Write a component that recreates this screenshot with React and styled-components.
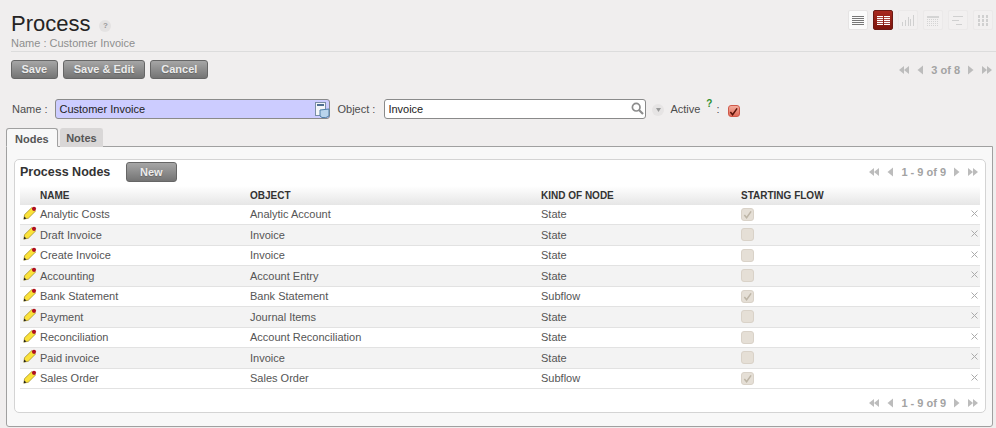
import React from "react";
import styled, { createGlobalStyle } from "styled-components";

const nodes = [
  { name: "Analytic Costs", object: "Analytic Account", kind: "State", flow: true },
  { name: "Draft Invoice", object: "Invoice", kind: "State", flow: false },
  { name: "Create Invoice", object: "Invoice", kind: "State", flow: false },
  { name: "Accounting", object: "Account Entry", kind: "State", flow: false },
  { name: "Bank Statement", object: "Bank Statement", kind: "Subflow", flow: true },
  { name: "Payment", object: "Journal Items", kind: "State", flow: false },
  { name: "Reconciliation", object: "Account Reconciliation", kind: "State", flow: false },
  { name: "Paid invoice", object: "Invoice", kind: "State", flow: false },
  { name: "Sales Order", object: "Sales Order", kind: "Subflow", flow: true },
];

const GlobalStyle = createGlobalStyle`
  html, body {
    margin: 0;
    background: #f0eeee;
    font-family: "Liberation Sans", Arial, sans-serif;
    font-size: 11px;
    color: #4c4c4c;
  }
`;

const Page = styled.div`
  width: 996px;
  height: 428px;
  overflow: hidden;
`;

const Header = styled.div`
  height: 51px;
  margin-left: 11px;
  border-bottom: 1px solid #dcdcdc;
  display: flex;
  justify-content: space-between;
`;

const TitleBlock = styled.div`
  padding-top: 10px;
`;

const TitleRow = styled.div`
  display: flex;
  align-items: center;
  gap: 9px;
  height: 27px;
`;

const Title = styled.h1`
  margin: 0;
  font-size: 22px;
  font-weight: normal;
  color: #252424;
  line-height: 27px;
`;

const HelpDot = styled.span`
  width: 12px;
  height: 12px;
  margin-top: 4px;
  border-radius: 50%;
  background: #e4e2e2;
  color: #999;
  font-size: 8px;
  font-weight: bold;
  text-align: center;
  line-height: 12px;
`;

const Subtitle = styled.div`
  font-size: 11px;
  line-height: 13px;
  color: #8e8e8e;
`;

const Views = styled.div`
  display: flex;
  gap: 5px;
  padding: 10px 3px 0 0;
`;

const ViewButton = styled.div`
  width: 20px;
  height: 20px;
  border-radius: 2px;
  display: flex;
  align-items: center;
  justify-content: center;
  box-sizing: border-box;
  background: ${(p) => (p.$active ? "linear-gradient(#a8281e, #7c150c)" : p.$on ? "#fbfbfb" : "#f2f0f0")};
  border: 1px solid ${(p) => (p.$active ? "#6b1a14" : p.$on ? "#e6e4e4" : "#ebe9e9")};
`;

const ActionBar = styled.div`
  height: 46px;
  padding: 8px 4px 0 11px;
  box-sizing: border-box;
  display: flex;
  align-items: flex-start;
  justify-content: space-between;
`;

const ButtonRow = styled.div`
  display: flex;
  gap: 5px;
`;

const GrayButton = styled.button`
  height: ${(p) => p.$height || 19}px;
  padding: 0 ${(p) => p.$pad || 10}px;
  border: 1px solid #666;
  border-radius: 3px;
  background: linear-gradient(#a6a6a6, #747474);
  color: #ececec;
  font-family: inherit;
  font-size: 11px;
  font-weight: bold;
  line-height: 17px;
  text-shadow: 0 1px 1px #666;
`;

const Pager = styled.div`
  height: 19px;
  display: flex;
  align-items: center;
  gap: 8px;
  color: #a3a3a3;
  font-size: 11px;
  font-weight: bold;
`;

const FormRow = styled.div`
  height: 30px;
  padding: 1px 0 0 12px;
  display: flex;
  align-items: flex-start;
  box-sizing: border-box;
`;

const Label = styled.label`
  line-height: 20px;
  color: #4c4c4c;
  font-size: 11px;
  margin-right: ${(p) => p.$gap}px;
`;

const Field = styled.div`
  position: relative;
  width: ${(p) => p.$width}px;
  height: 20px;
  box-sizing: border-box;
  border: 1px solid #8a8a8a;
  border-radius: 3px;
  padding-left: 3px;
  background: ${(p) => p.$bg};
  color: #222;
  line-height: 18px;
  font-size: 11px;
  margin-right: ${(p) => p.$gap}px;
`;

const FieldIcon = styled.span`
  position: absolute;
  right: ${(p) => p.$right}px;
  top: ${(p) => p.$top}px;
  line-height: 0;
`;

const RoundDown = styled.span`
  width: 12px;
  height: 12px;
  margin: 5px 6px 0 0;
  border-radius: 50%;
  background: #e6e4e4;
  display: flex;
  align-items: center;
  justify-content: center;
`;

const GreenMark = styled.sup`
  color: #2f8f2f;
  font-weight: bold;
  font-size: 10px;
  line-height: 12px;
  margin: -1px 4px 0 6px;
  vertical-align: top;
`;

const ActiveLabel = styled.div`
  display: flex;
  line-height: 20px;
  margin-right: 8px;
`;

const RedCheck = styled.span`
  width: 12px;
  height: 12px;
  box-sizing: border-box;
  margin-top: 6px;
  border-radius: 3px;
  border: 1px solid #d0594a;
  background: linear-gradient(#f4ad9e, #e06a58);
  display: flex;
  align-items: center;
  justify-content: center;
`;

const Tabs = styled.div`
  display: flex;
  gap: 2px;
  padding-left: 6px;
  align-items: flex-end;
  height: 19px;
  position: relative;
  z-index: 1;
`;

const Tab = styled.div`
  height: 19px;
  padding: 0 ${(p) => (p.$active ? 8 : 5.5)}px;
  box-sizing: border-box;
  border: 1px solid ${(p) => (p.$active ? "#a0a0a0" : "#d9d7d7")};
  border-bottom: ${(p) => (p.$active ? "1px solid #f8f8f8" : "none")};
  border-radius: 3px 3px 0 0;
  background: ${(p) => (p.$active ? "#f8f8f8" : "#d9d7d7")};
  color: #555;
  font-weight: bold;
  font-size: 11px;
  line-height: ${(p) => (p.$active ? 20 : 18)}px;
`;

const TabPanel = styled.div`
  margin: -1px 3px 0 6px;
  height: 281px;
  box-sizing: border-box;
  padding: 12px 6px 0 7px;
  border: 1px solid #a0a0a0;
  border-radius: 0 0 3px 3px;
  background: #f8f8f8;
`;

const ListBox = styled.div`
  height: 254px;
  box-sizing: border-box;
  padding: 0 5px;
  border: 1px solid #d4d4d4;
  border-radius: 5px;
  background: #fff;
`;

const ListHead = styled.div`
  height: 26px;
  box-sizing: border-box;
  padding: 0 2px 2px 0;
  display: flex;
  align-items: center;
  justify-content: space-between;
`;

const ListTitle = styled.div`
  display: flex;
  align-items: center;
`;

const ListName = styled.h2`
  margin: 0 15px 0 0;
  width: 91px;
  font-size: 12.5px;
  font-weight: bold;
  color: #333;
  white-space: nowrap;
`;

const NodeTable = styled.div`
  font-size: 11px;
`;

const Columns = styled.div`
  display: grid;
  grid-template-columns: 20px 210px 291px 200px 1fr 20px;
  align-items: center;
`;

const HeadRow = styled(Columns)`
  height: 18.5px;
  background: linear-gradient(#fff, #e6e6e6);
  color: #333;
  font-size: 10px;
  font-weight: bold;
`;

const NodeRow = styled(Columns)`
  height: 20.5px;
  box-sizing: border-box;
  border-bottom: 1px solid #e2e2e2;
  background: ${(p) => (p.$odd ? "#f3f3f3" : "#fff")};
  color: #555;
`;

const EditCell = styled.span`
  padding-left: 3px;
  line-height: 0;
  margin-top: -3px;
`;

const FlowBox = styled.span`
  width: 13px;
  height: 13px;
  box-sizing: border-box;
  border-radius: 3px;
  border: 1px solid #d9d2c8;
  background: #e5dfd6;
  display: flex;
  align-items: center;
  justify-content: center;
`;

const Remove = styled.span`
  line-height: 0;
  margin-top: -2px;
  padding-left: 11px;
`;

const ListFoot = styled.div`
  display: flex;
  justify-content: flex-end;
  padding: 4px 2px 0 0;
`;

const Arrow = ({ dir, double }) => (
  <svg width={double ? 10 : 6} height="10" viewBox={double ? "0 0 11 10" : "0 0 6 10"}>
    <g fill="#bcbcbc" transform={dir === "left" ? `translate(${double ? 11 : 6},0) scale(-1,1)` : undefined}>
      <path d="M0 0.5 L5.5 5 L0 9.5 Z" />
      {double && <path d="M5.5 0.5 L11 5 L5.5 9.5 Z" />}
    </g>
  </svg>
);

const Paging = ({ label }) => (
  <Pager>
    <Arrow dir="left" double />
    <Arrow dir="left" />
    <span>{label}</span>
    <Arrow dir="right" />
    <Arrow dir="right" double />
  </Pager>
);

const ListIcon = () => (
  <svg width="12" height="9" viewBox="0 0 12 9" fill="#777">
    {[0, 2, 4, 6, 8].map((y) => <rect key={y} y={y} width="12" height="1" />)}
  </svg>
);

const TableIcon = () => (
  <svg width="13" height="9" viewBox="0 0 13 9" fill="#fff">
    {[0, 2, 4, 6, 8].map((y) => (
      <g key={y}>
        <rect y={y} width="6" height="1.2" />
        <rect x="7" y={y} width="6" height="1.2" />
      </g>
    ))}
  </svg>
);

const BarsIcon = () => (
  <svg width="12" height="11" viewBox="0 0 12 11" fill="#d0d0d0">
    <rect x="0" y="7" width="1" height="4" />
    <rect x="3" y="5" width="1" height="6" />
    <rect x="6" y="2" width="1" height="9" />
    <rect x="8" y="4" width="1" height="7" />
    <rect x="11" y="0" width="1" height="11" />
  </svg>
);

const CalendarIcon = () => (
  <svg width="12" height="11" viewBox="0 0 12 11" fill="#d4d4d4">
    <rect x="0" y="1" width="12" height="2" />
    {[4, 6, 8, 10].map((y) =>
      [0, 2, 4, 6, 8, 10].map((x) => <rect key={`${x}-${y}`} x={x} y={y} width="1" height="1" />)
    )}
  </svg>
);

const GanttIcon = () => (
  <svg width="12" height="9" viewBox="0 0 12 9" fill="#d0d0d0">
    <rect x="1" y="0" width="10" height="1" />
    <rect x="0" y="4" width="7" height="1" />
    <rect x="4" y="8" width="6" height="1" />
  </svg>
);

const GridIcon = () => (
  <svg width="10" height="11" viewBox="0 0 10 11" fill="#d0d0d0">
    {[0, 4, 8].map((y) =>
      [0, 4, 8].map((x) => <rect key={`${x}-${y}`} x={x} y={y} width="2" height="3" />)
    )}
  </svg>
);

const Pencil = () => (
  <svg width="14" height="14" viewBox="0 0 14 14">
    <path d="M0.8 13.2 L1.6 8.6 L8.8 1.6 L12.6 5 L5.4 12.2 Z" fill="#fbe23a" stroke="#8a7614" strokeWidth="0.6" />
    <path d="M0.8 13.2 L1.3 10.6 L3.4 12.6 Z" fill="#222" />
    <circle cx="11" cy="2.8" r="2.1" fill="#b01020" />
  </svg>
);

const Tick = ({ color, size = 9 }) => (
  <svg width={size} height={size} viewBox="0 0 10 10">
    <path d="M1.5 5.5 L4 8.5 L9 1.5" fill="none" stroke={color} strokeWidth="1.7" />
  </svg>
);

const Cross = () => (
  <svg width="7" height="7" viewBox="0 0 7 7">
    <path d="M0.5 0.5 L6.5 6.5 M6.5 0.5 L0.5 6.5" stroke="#aaa" strokeWidth="1" />
  </svg>
);

const TranslateIcon = () => (
  <svg width="15" height="17" viewBox="0 0 15 17">
    <rect x="0.5" y="0.5" width="10" height="13" fill="#f4f6f8" stroke="#7b8ea5" />
    <rect x="2" y="2" width="7" height="2" fill="#4f6f92" />
    <path d="M5 8 L14 7 L14 14 Q11 16.5 7 15.5 L5 14 Z" fill="#b9d4ec" stroke="#4f7fa8" />
  </svg>
);

const SearchIcon = () => (
  <svg width="13" height="13" viewBox="0 0 13 13">
    <circle cx="5.2" cy="5.2" r="3.8" fill="none" stroke="#8c8c8c" strokeWidth="1.7" />
    <path d="M8 8 L12 12" stroke="#8c8c8c" strokeWidth="2.2" />
  </svg>
);

const App = () => {
  return (
    <Page>
      <GlobalStyle />
      <Header>
        <TitleBlock>
          <TitleRow>
            <Title>Process</Title>
            <HelpDot>?</HelpDot>
          </TitleRow>
          <Subtitle>Name : Customer Invoice</Subtitle>
        </TitleBlock>
        <Views>
          <ViewButton $on><ListIcon /></ViewButton>
          <ViewButton $active><TableIcon /></ViewButton>
          <ViewButton><BarsIcon /></ViewButton>
          <ViewButton><CalendarIcon /></ViewButton>
          <ViewButton><GanttIcon /></ViewButton>
          <ViewButton><GridIcon /></ViewButton>
        </Views>
      </Header>

      <ActionBar>
        <ButtonRow>
          <GrayButton $pad={9.5}>Save</GrayButton>
          <GrayButton $pad={10}>Save &amp; Edit</GrayButton>
          <GrayButton $pad={10}>Cancel</GrayButton>
        </ButtonRow>
        <Paging label="3 of 8" />
      </ActionBar>

      <FormRow>
        <Label $gap={8}>Name :</Label>
        <Field $width={275} $bg="#ccccff" $gap={7}>
          Customer Invoice
          <FieldIcon $right={-1} $top={2}><TranslateIcon /></FieldIcon>
        </Field>
        <Label $gap={9}>Object :</Label>
        <Field $width={262} $bg="#fff" $gap={6}>
          Invoice
          <FieldIcon $right={1} $top={2}><SearchIcon /></FieldIcon>
        </Field>
        <RoundDown>
          <svg width="5" height="4" viewBox="0 0 5 4"><path d="M0 0 H5 L2.5 4 Z" fill="#999" /></svg>
        </RoundDown>
        <ActiveLabel>
          Active<GreenMark>?</GreenMark> :
        </ActiveLabel>
        <RedCheck><Tick color="#5a1208" /></RedCheck>
      </FormRow>

      <Tabs>
        <Tab $active>Nodes</Tab>
        <Tab>Notes</Tab>
      </Tabs>
      <TabPanel>
        <ListBox>
          <ListHead>
            <ListTitle>
              <ListName>Process Nodes</ListName>
              <GrayButton $pad={13} $height={20}>New</GrayButton>
            </ListTitle>
            <Paging label="1 - 9 of 9" />
          </ListHead>
          <NodeTable>
            <HeadRow>
              <span />
              <span>NAME</span>
              <span>OBJECT</span>
              <span>KIND OF NODE</span>
              <span>STARTING FLOW</span>
              <span />
            </HeadRow>
            {nodes.map((node, i) => (
              <NodeRow key={node.name} $odd={i % 2 === 1}>
                <EditCell><Pencil /></EditCell>
                <span>{node.name}</span>
                <span>{node.object}</span>
                <span>{node.kind}</span>
                <FlowBox>{node.flow && <Tick color="#bdb5a6" />}</FlowBox>
                <Remove><Cross /></Remove>
              </NodeRow>
            ))}
          </NodeTable>
          <ListFoot>
            <Paging label="1 - 9 of 9" />
          </ListFoot>
        </ListBox>
      </TabPanel>
    </Page>
  );
};

export default App;
